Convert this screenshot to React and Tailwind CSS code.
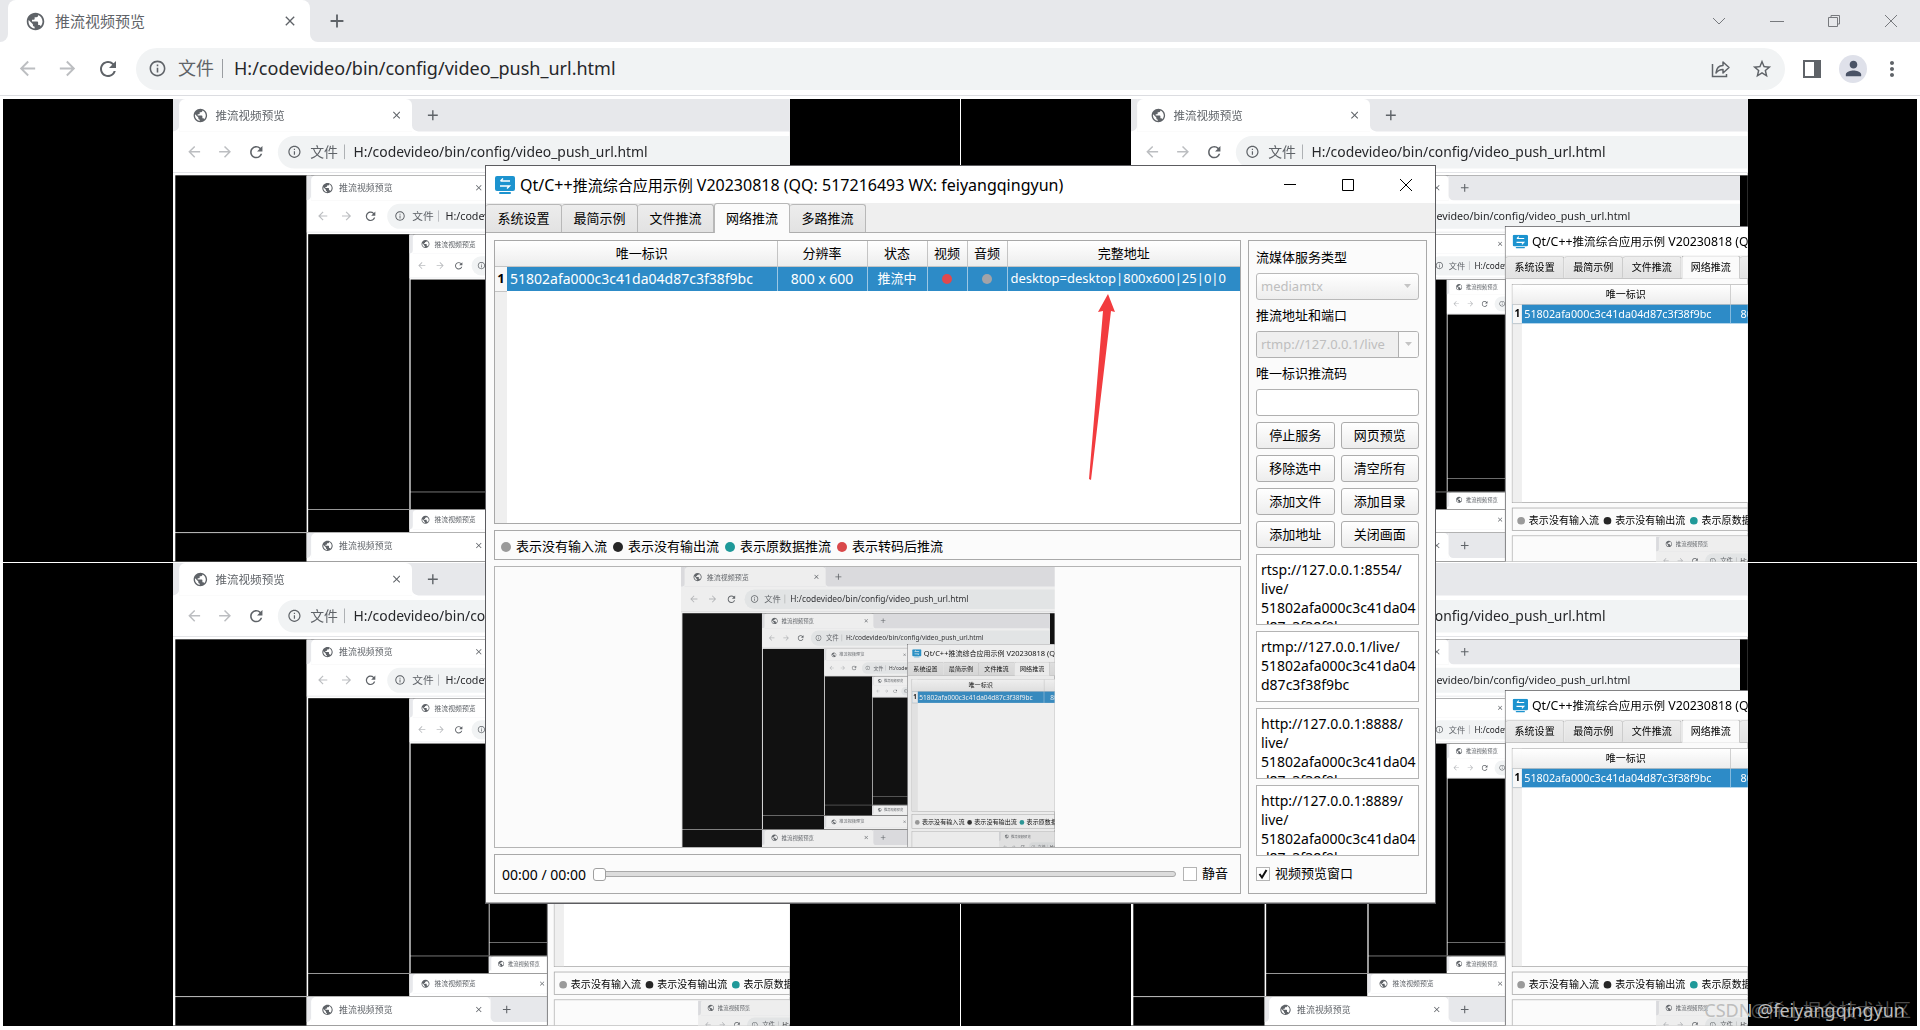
import { useState } from 'react';
import {
  MdAdd, MdArrowBack, MdArrowForward, MdClose, MdInfoOutline, MdMoreVert,
  MdPerson, MdPublic, MdRefresh, MdStarBorder,
} from 'react-icons/md';

const STREAM_ID = '51802afa000c3c41da04d87c3f38f9bc';

const TABS = ['系统设置', '最简示例', '文件推流', '网络推流', '多路推流'];

const LEGEND = [
  { color: 'bg-[#9a9a9a]', label: '表示没有输入流' },
  { color: 'bg-[#262626]', label: '表示没有输出流' },
  { color: 'bg-[#1f9999]', label: '表示原数据推流' },
  { color: 'bg-[#d9484a]', label: '表示转码后推流' },
];

const ACTIONS = ['停止服务', '网页预览', '移除选中', '清空所有', '添加文件', '添加目录', '添加地址', '关闭画面'];

const URLS = [
  'rtsp://127.0.0.1:8554/\nlive/\n51802afa000c3c41da04\nd87c3f38f9bc',
  'rtmp://127.0.0.1/live/\n51802afa000c3c41da04\nd87c3f38f9bc',
  'http://127.0.0.1:8888/\nlive/\n51802afa000c3c41da04\nd87c3f38f9bc',
  'http://127.0.0.1:8889/\nlive/\n51802afa000c3c41da04\nd87c3f38f9bc',
];

function ShareIcon() {
  return (
    <svg width="20" height="18" viewBox="0 0 20 18" fill="none" stroke="#5f6368" strokeWidth="1.5">
      <path d="M1.5 4v12.5h14V14" />
      <path d="M5 13c.5-5 3-7.500 7-7.500V2l6 5.500-6 5.500V9.500c-3 0-5 .8-7 3.500z" strokeLinejoin="round" />
    </svg>
  );
}

function AppLogo() {
  return (
    <svg width="20" height="18" viewBox="0 0 20 18">
      <rect width="20" height="15" rx="2" fill="#1c93cf" />
      <rect x="4" y="16" width="12" height="2" rx="1" fill="#1c93cf" />
      <path d="M5.500 5H15M8 2.500L5.500 5M5 10h9.500L12 12.500" fill="none" stroke="#fff" strokeWidth="1.4" />
    </svg>
  );
}

function CaptionButton({ label, className, children }) {
  return (
    <button aria-label={label} className={`flex h-full items-center justify-center ${className}`}>
      <svg width="14" height="14" viewBox="0 0 14 14" fill="none" stroke="currentColor">{children}</svg>
    </button>
  );
}

function Browser() {
  return (
    <header className="font-['Noto_Sans','Noto_Sans_CJK_SC',sans-serif] text-[#5f6368]">
      <div className="flex h-[42px]">
        <div className="w-2 bg-white">
          <div className="h-full rounded-br-lg bg-[#e7e8eb]" />
        </div>
        <div className="w-[302px] bg-[#e7e8eb]">
          <div className="flex h-full items-center rounded-t-lg bg-white pr-3 pl-[17px]">
            <MdPublic size={21} />
            <span className="ml-[9px] flex-1 text-[15px]">推流视频预览</span>
            <button aria-label="关闭标签页"><MdClose size={16} /></button>
          </div>
        </div>
        <div className="flex-1 bg-white">
          <div className="flex h-full items-center rounded-bl-lg bg-[#e7e8eb] pl-[16px]">
            <button aria-label="新标签页"><MdAdd size={22} /></button>
            <div className="ml-auto flex h-9 text-[#77797d]">
              <CaptionButton label="搜索标签页" className="w-[58px]"><path d="M1 4l6 6 6-6" /></CaptionButton>
              <CaptionButton label="最小化" className="w-[57px]"><path d="M0 7.500h14" /></CaptionButton>
              <CaptionButton label="还原" className="w-[57px]"><path d="M1.500 3.500h9v9h-9zM4 3V1.500h8.500V10H11" /></CaptionButton>
              <CaptionButton label="关闭" className="w-[58px]"><path d="M1 1l12 12M13 1L1 13" /></CaptionButton>
            </div>
          </div>
        </div>
      </div>
      <div className="flex h-[54px] items-center border-b border-[#dcdde1] bg-white pr-[16px] pl-[16px]">
        <button aria-label="后退" className="text-[#bcbec1]"><MdArrowBack size={23} /></button>
        <button aria-label="前进" className="ml-[17px] text-[#bcbec1]"><MdArrowForward size={23} /></button>
        <button aria-label="重新加载" className="ml-[17px]"><MdRefresh size={24} /></button>
        <div className="ml-[16px] flex h-[42px] flex-1 items-center rounded-full bg-[#f1f3f4] pr-[12px] pl-3">
          <MdInfoOutline size={19} />
          <span className="ml-[11px] text-[18px]">文件</span>
          <span className="ml-2 h-[19px] w-px bg-[#9a9da1]" />
          <label className="ml-[11px] flex-1">
            <input
              aria-label="地址"
              readOnly
              value="H:/codevideo/bin/config/video_push_url.html"
              className="w-full bg-transparent text-[18px] text-[#26272a] outline-none"
            />
          </label>
          <button aria-label="分享"><ShareIcon /></button>
          <button aria-label="收藏" className="ml-[20px]"><MdStarBorder size={22} /></button>
        </div>
        <button aria-label="侧边栏" className="ml-[18px]">
          <svg width="18" height="18" viewBox="0 0 18 18">
            <path d="M1 1h16v16H1z" fill="none" stroke="#5f6368" strokeWidth="2" />
            <path d="M11 1h6v16h-6z" fill="#5f6368" />
          </svg>
        </button>
        <button aria-label="用户" className="ml-[18px] flex size-7 items-center justify-center rounded-full bg-[#dfe1ea] text-[#4a5366]">
          <MdPerson size={23} />
        </button>
        <button aria-label="菜单" className="ml-[13px]"><MdMoreVert size={24} /></button>
      </div>
    </header>
  );
}

// 800x600 grab of the desktop's top left corner, which again holds the page
function Capture({ depth, scale }) {
  return (
    <div className={`h-[600px] w-[800px] shrink-0 origin-top-left overflow-hidden ${scale}`}>
      <div className="h-[1030px] w-[1920px]">
        <Desktop depth={depth} captured />
      </div>
    </div>
  );
}

function VideoTile({ depth }) {
  return (
    <div className="flex h-[463px] justify-center overflow-hidden bg-black">
      <div className="w-[616px]">
        {depth >= 0 && <Capture depth={depth} scale="scale-[0.771]" />}
      </div>
    </div>
  );
}

function StreamTable() {
  return (
    <div className="relative flex h-[284px] flex-col border border-[#a8a8a8] bg-white">
      <div className="absolute inset-y-0 left-0 w-3 bg-[#efefef]" />
      <table className="relative w-full table-fixed border-collapse text-[13px]">
        <colgroup>
          <col className="w-3" />
          <col className="w-[270px]" />
          <col className="w-[90px]" />
          <col className="w-[60px]" />
          <col className="w-[40px]" />
          <col className="w-[40px]" />
          <col />
        </colgroup>
        <thead>
          <tr className="h-[25px] bg-linear-to-b from-white to-[#ededed]">
            <td className="border-b border-[#c4c4c4] p-0" />
            <th className="border-r border-b border-[#c4c4c4] p-0 font-normal">唯一标识</th>
            {['分辨率', '状态', '视频', '音频'].map((h) => (
              <th key={h} className="border-r border-b border-[#c4c4c4] p-0 font-normal">{h}</th>
            ))}
            <th className="border-b border-[#c4c4c4] p-0 font-normal">完整地址</th>
          </tr>
        </thead>
        <tbody>
          <tr className="h-[25px] bg-[#2d8bc7] text-white">
            <th className="border-b border-[#c4c4c4] bg-[#f7f7f7] p-0 text-black">1</th>
            <td className="border-r border-[#9cc7e4] py-0 pr-0 pl-[3px] text-[14px]">{STREAM_ID}</td>
            <td className="border-r border-[#9cc7e4] p-0 text-center text-[14px]">800 x 600</td>
            <td className="border-r border-[#9cc7e4] p-0 text-center">推流中</td>
            <td className="border-r border-[#9cc7e4] p-0">
              <div className="mx-auto size-[10px] rounded-full bg-[#e0494d]" />
            </td>
            <td className="border-r border-[#9cc7e4] p-0">
              <div className="mx-auto size-[10px] rounded-full bg-[#a3a3a8]" />
            </td>
            <td className="overflow-hidden py-0 pr-0 pl-[3px] whitespace-nowrap">desktop=desktop|800x600|25|0|0</td>
          </tr>
        </tbody>
      </table>
    </div>
  );
}

function PlayBar() {
  return (
    <>
      <span className="text-[14px] whitespace-pre">00:00 / 00:00</span>
      <label className="relative ml-[7px] flex flex-1 items-center">
        <span className="absolute inset-x-0 h-[6px] rounded-full border border-[#a9a9a9] bg-[#dcdcdc]" />
        <input
          type="range"
          aria-label="进度"
          defaultValue="0"
          className="relative h-[14px] w-full appearance-none bg-transparent [&::-webkit-slider-thumb]:size-[13px] [&::-webkit-slider-thumb]:appearance-none [&::-webkit-slider-thumb]:rounded-[3px] [&::-webkit-slider-thumb]:border [&::-webkit-slider-thumb]:border-[#a0a0a0] [&::-webkit-slider-thumb]:bg-white"
        />
      </label>
      <label className="ml-[7px] flex items-center gap-[5px]">
        <input type="checkbox" className="size-[14px] appearance-none border border-[#b4b4b4] bg-white" />
        静音
      </label>
    </>
  );
}

function SidePanel() {
  const [preview, setPreview] = useState(true);

  return (
    <div className="flex flex-col gap-[6px]">
      <label htmlFor="server" className="h-[19px] leading-[19px]">流媒体服务类型</label>
      <div className="relative">
        <select
          id="server"
          disabled
          className="h-[27px] w-full appearance-none rounded-[3px] border border-[#b9b9b9] bg-linear-to-b from-white to-[#ededed] px-1 text-[13px] text-[#bebebe] opacity-100"
        >
          <option>mediamtx</option>
        </select>
        <svg className="absolute top-[11px] right-2" width="7" height="5"><path d="M0 0h7L3.500 4z" fill="#c4c4c4" /></svg>
      </div>
      <label htmlFor="address" className="h-[19px] leading-[19px]">推流地址和端口</label>
      <div className="flex h-[27px] overflow-hidden rounded-[3px] border border-[#b0b0b0]">
        <input id="address" disabled value="rtmp://127.0.0.1/live" className="min-w-0 flex-1 bg-[#efefef] px-1 text-[13px] text-[#bebebe]" />
        <button disabled aria-label="展开" className="flex w-5 items-center justify-center border-l border-[#b0b0b0] bg-[#fafafa]">
          <svg width="7" height="5"><path d="M0 0h7L3.500 4z" fill="#c4c4c4" /></svg>
        </button>
      </div>
      <label htmlFor="code" className="h-[19px] leading-[19px]">唯一标识推流码</label>
      <input id="code" className="h-[27px] rounded-[3px] border border-[#b0b0b0] bg-white px-1" />
      <div className="grid grid-cols-2 gap-[6px]">
        {ACTIONS.map((a) => (
          <button key={a} className="h-[27px] rounded-[3px] border border-[#acacac] bg-linear-to-b from-white to-[#ededed]">
            {a}
          </button>
        ))}
      </div>
      {URLS.map((url) => (
        <textarea
          key={url}
          readOnly
          value={url}
          aria-label={url.split('\n')[0]}
          className="block h-[71px] w-full resize-none overflow-hidden border border-[#b4b4b4] bg-white pt-[5px] pl-1 text-[14px] leading-[19px] whitespace-pre outline-none"
        />
      ))}
      <label className="flex h-6 items-center gap-[5px]">
        <span className="relative size-[14px]">
          <input
            type="checkbox"
            checked={preview}
            onChange={(e) => setPreview(e.target.checked)}
            className="block size-[14px] appearance-none border border-[#b4b4b4] bg-white"
          />
          {preview && (
            <svg className="pointer-events-none absolute inset-0" width="14" height="14" fill="none" stroke="#111" strokeWidth="2">
              <path d="M3.500 7l2.500 3.500L10.500 3" />
            </svg>
          )}
        </span>
        视频预览窗口
      </label>
    </div>
  );
}

function PushWindow({ depth, captured }) {
  const [tab, setTab] = useState('网络推流');

  return (
    <section className="absolute top-[165px] left-[485px] w-[951px] border border-[#5c5c60] bg-[#fbfbfb] font-['Noto_Sans','Noto_Sans_CJK_SC',sans-serif] text-[13px] text-black">
      <div className="flex h-[37px] items-center bg-white pl-[9px]">
        <AppLogo />
        <h1 className="ml-[5px] text-[16px] whitespace-nowrap">
          Qt/C++<span className="text-[15px]">推流综合应用示例</span> V20230818 (QQ: 517216493 WX: feiyangqingyun)
        </h1>
        <div className="ml-auto flex h-full">
          <CaptionButton label="最小化" className="w-[58px]"><path d="M1 6.500h12" /></CaptionButton>
          <CaptionButton label="最大化" className="w-[58px]"><path d="M1.500 1.500h11v11h-11z" /></CaptionButton>
          <CaptionButton label="关闭" className="w-[58px]"><path d="M1 1l12 12M13 1L1 13" /></CaptionButton>
        </div>
      </div>
      <div className="flex h-[30px] items-end border-b border-[#adadad] bg-[#efefef]">
        {TABS.map((t) => (
          <button
            key={t}
            onClick={() => setTab(t)}
            className={`w-[76px] rounded-t-[3px] border-t border-r border-[#b8b8b8] pt-px ${
              t === tab ? '-mb-px h-[30px] border-l bg-[#fbfbfb]' : 'h-[28px] bg-linear-to-b from-[#ededed] to-[#e2e2e2]'
            }`}
          >
            {t}
          </button>
        ))}
      </div>
      <div className="flex gap-[7px] border-b border-[#adadad] px-2 pt-[7px] pb-[8px]">
        <div className="flex min-w-0 flex-1 flex-col gap-[6px]">
          <StreamTable />
          <div className="flex h-[30px] items-center gap-[6px] border border-[#a8a8a8] px-[6px] pt-[3px]">
            {LEGEND.map((item) => (
              <span key={item.label} className="flex items-center gap-[5px] whitespace-nowrap">
                <span className={`size-[10px] rounded-full ${item.color}`} />
                {item.label}
              </span>
            ))}
          </div>
          <div className="flex h-[282px] justify-center overflow-hidden border border-[#b4b4b4]">
            <div className="w-[373px] contrast-[0.87]">
              {depth > 0 && <Capture depth={captured ? 0 : depth} scale="scale-[0.467]" />}
            </div>
          </div>
          <div className="flex h-[40px] items-center border border-[#a8a8a8] pr-[12px] pl-[7px]">
            {!captured && <PlayBar />}
          </div>
        </div>
        <aside className="w-[179px] border border-[#a8a8a8] px-[7px] pt-[7px]">
          {!captured && <SidePanel />}
        </aside>
      </div>
    </section>
  );
}

function Desktop({ depth, captured }) {
  return (
    <div
      className="relative h-full overflow-hidden bg-white"
      aria-hidden={captured}
      inert={captured}
    >
      <Browser />
      <main className="grid grid-cols-2 gap-px px-[3px] pt-[3px]">
        <VideoTile depth={depth - 1} />
        {captured ? <div className="bg-black" /> : <VideoTile depth={depth - 1} />}
        <VideoTile depth={captured ? Math.min(depth - 1, 0) : depth - 1} />
        {captured ? <div className="bg-black" /> : <VideoTile depth={depth - 1} />}
      </main>
      {depth > 0 && <PushWindow depth={depth - 1} captured={captured} />}
    </div>
  );
}

export default function App() {
  return (
    <div className="relative h-screen overflow-hidden">
      <Desktop depth={5} />
      <svg className="absolute top-[293px] left-[1086px]" width="32" height="190" viewBox="0 0 32 190">
        <path d="M22 1l7 18-4-1L5 187l-2-1L17 18l-5 1z" fill="#f23c3f" />
      </svg>
      <p className="absolute right-[9px] bottom-[6px] font-['Noto_Sans','Noto_Sans_CJK_SC',sans-serif] text-[18px] text-[#6f6f6f]/70">@稀土掘金技术社区</p>
      <p className="absolute right-[15px] bottom-[6px] font-['Noto_Sans',sans-serif] text-[18px] text-[#bdbdbd]">CSDN @feiyangqingyun</p>
    </div>
  );
}
